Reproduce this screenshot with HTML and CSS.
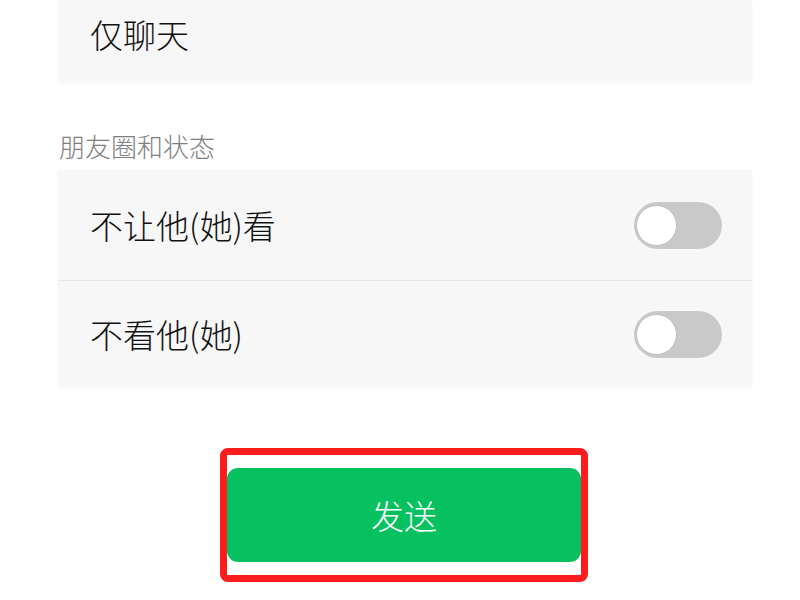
FILE: index.html
```html
<!DOCTYPE html>
<html lang="zh-CN">
<head>
  <meta charset="UTF-8">
  <title>朋友权限</title>
  <link rel="stylesheet" href="styles.css">
</head>
<body>

  <div class="page">
    <!-- Chat only -->
    <div class="card">
      <div class="row row-top">仅聊天</div>
    </div>

    <!-- Moments section -->
    <div class="section-title">朋友圈和状态</div>
    <div class="card">
      <div class="row row-first">
        <span>不让他(她)看</span>
        <span class="switch"><span class="knob"></span></span>
      </div>
      <div class="row row-last">
        <span>不看他(她)</span>
        <span class="switch"><span class="knob"></span></span>
      </div>
    </div>

    <!-- Send button -->
    <div class="highlight">
      <button class="btn">发送</button>
    </div>
  </div>

</body>
</html>
```

FILE: styles.css
```css
body {
  margin: 0;
  background-color: #ffffff;
  font-family: "Noto Sans CJK SC", "Noto Sans", sans-serif;
  font-weight: 300;
  color: #111111;
}

.page {
  width: 694px;
  padding-left: 58px;
}

.card {
  background-color: #f7f7f7;
  box-shadow: 0 2px 4px rgba(0, 0, 0, 0.03);
}

.row {
  display: flex;
  align-items: center;
  justify-content: space-between;
  padding: 0 30px 0 32px;
  font-size: 33px;
  line-height: 34px;
}

.row-top {
  display: block;
  height: 65px;
  padding-top: 17px;
}

.row-first {
  height: 110px;
  border-bottom: 1px solid #e6e6e6;
}

.row-last {
  height: 106px;
}

.section-title {
  margin: 51px 0 11px 1px;
  font-size: 26px;
  line-height: 26px;
  color: #7f7f7f;
}

.switch {
  display: flex;
  align-items: center;
  width: 88px;
  height: 47px;
  border-radius: 24px;
  background-color: #c9c9c9;
  box-sizing: border-box;
  padding-left: 2px;
}

.knob {
  width: 41px;
  height: 41px;
  border-radius: 50%;
  background-color: #ffffff;
  border: 1px solid #bdbdbd;
  box-sizing: border-box;
}

.highlight {
  width: 354px;
  margin: 61px 0 0 162px;
  padding: 13px 0;
  border: 7px solid #ff1c1c;
  border-radius: 8px;
}

.btn {
  display: block;
  width: 354px;
  height: 94px;
  border: none;
  border-radius: 11px;
  background-color: #07c160;
  color: #ffffff;
  font-family: "Noto Sans CJK SC", sans-serif;
  font-weight: 300;
  font-size: 33px;
  cursor: pointer;
}
```
